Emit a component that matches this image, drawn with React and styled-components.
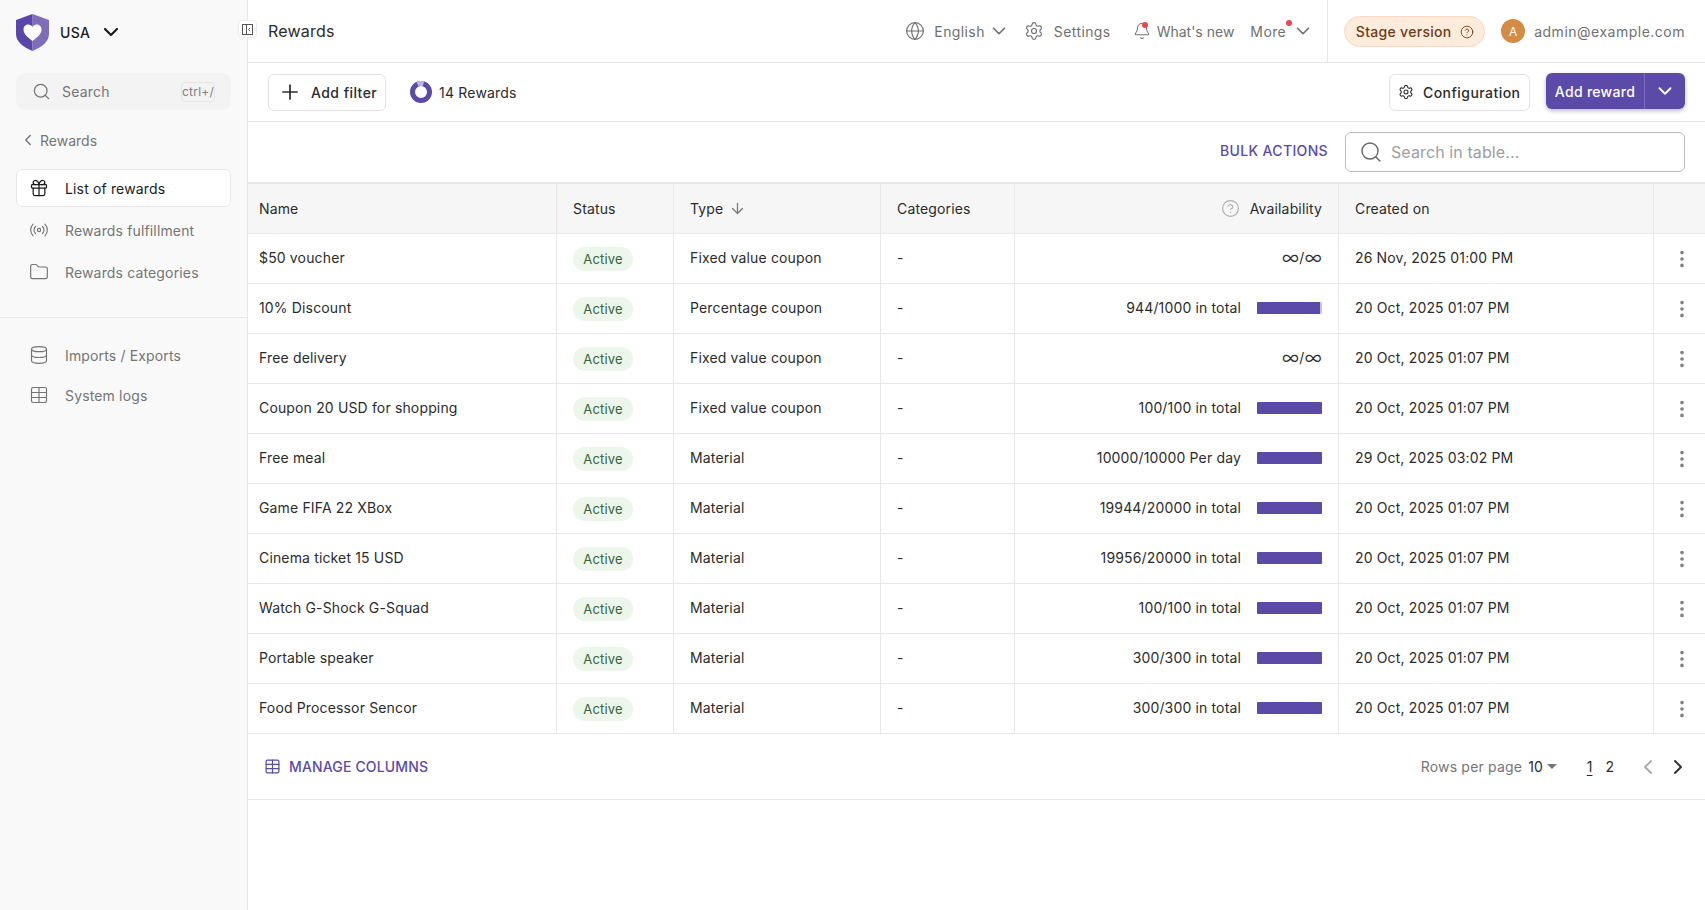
import React from "react";
import styled, { createGlobalStyle } from "styled-components";
import {
  ArrowDown,
  Bell,
  ChevronDown,
  ChevronLeft,
  ChevronRight,
  CircleHelp,
  Database,
  EllipsisVertical,
  Folder,
  Gift,
  Globe,
  Plus,
  Radio,
  Search,
  Settings,
  Table,
} from "lucide-react";

const PURPLE = "#5c4aa8";
const LINE = "#e8e8e8";

const GlobalStyle = createGlobalStyle`
  html, body { margin: 0; padding: 0; background: #fff; }
  body { font-family: Inter, "Liberation Sans", sans-serif; font-size: 14px; color: #2b2b2b; overflow: hidden; }
  * { box-sizing: border-box; }
`;

const Page = styled.div`
  display: flex;
  height: 910px;
  position: relative;
`;

const Sidebar = styled.aside`
  width: 248px;
  flex-shrink: 0;
  background: #f9f9f9;
  border-right: 1px solid ${LINE};
  display: flex;
  flex-direction: column;
`;

const Brand = styled.div`
  height: 63px;
  padding: 14px 16px 0;
  display: flex;
  align-items: flex-start;
  gap: 7px;
`;

const Country = styled.div`
  display: flex;
  align-items: center;
  gap: 9px;
  height: 36px;
  padding: 0 4px;
  font-weight: 500;
  color: #1c1c1c;
  letter-spacing: 0.3px;
`;

const SideSearch = styled.div`
  margin: 10px 16px 0;
  height: 37px;
  background: #f3f3f3;
  border-radius: 9px;
  display: flex;
  align-items: center;
  padding: 0 16px;
  gap: 11px;
  color: #757575;
  svg { flex-shrink: 0; }
`;

const SearchLabel = styled.span`
  flex: 1;
  letter-spacing: 0.2px;
`;

const Kbd = styled.span`
  font-size: 12px;
  color: #808080;
  border: 1px solid #e6e6e6;
  border-radius: 4px;
  height: 20px;
  width: 34px;
  display: flex;
  align-items: center;
  justify-content: center;
  white-space: nowrap;
  letter-spacing: 0.2px;
`;

const BackLink = styled.div`
  margin: 20px 0 0 19px;
  height: 20px;
  display: flex;
  align-items: center;
  gap: 3px;
  color: #757575;
`;

const NavList = styled.nav`
  display: flex;
  flex-direction: column;
  margin: ${({ $top }) => $top || 0}px 16px 0;
`;

const NavItem = styled.div`
  height: ${({ $height }) => $height}px;
  display: flex;
  align-items: center;
  gap: 16px;
  padding-left: 12px;
  border-radius: 6px;
  color: ${({ $active }) => ($active ? "#1c1c1c" : "#757575")};
  background: ${({ $active }) => ($active ? "#fff" : "transparent")};
  border: 1px solid ${({ $active }) => ($active ? LINE : "transparent")};
  letter-spacing: 0.15px;
`;

const SideDivider = styled.div`
  height: 1px;
  background: ${LINE};
  margin: 26px 0 17px;
`;

const CollapseButton = styled.button`
  position: absolute;
  left: 238px;
  top: 20px;
  width: 19px;
  height: 18px;
  padding: 0;
  background: #fff;
  border: 1px solid #ececec;
  border-radius: 4px;
  display: flex;
  align-items: center;
  justify-content: center;
`;

const Main = styled.main`
  flex: 1;
  min-width: 0;
  display: flex;
  flex-direction: column;
`;

const TopBar = styled.header`
  height: 63px;
  border-bottom: 1px solid ${LINE};
  display: flex;
  align-items: center;
  padding-left: 20px;
`;

const PageTitle = styled.div`
  flex: 1;
  font-size: 16px;
  color: #2b2b2b;
  margin-top: -1px;
  letter-spacing: 0.2px;
`;

const TopNav = styled.div`
  display: flex;
  align-items: center;
  height: 100%;
  color: #707070;
  padding-right: 13px;
  border-right: 1px solid ${LINE};
`;

const TopItem = styled.div`
  display: flex;
  align-items: center;
  gap: ${({ $gap }) => $gap}px;
  margin-left: ${({ $left }) => $left || 0}px;
  position: relative;
  white-space: nowrap;
  letter-spacing: ${({ $spacing }) => $spacing ?? 0.4}px;
`;

const RedDot = styled.span`
  position: absolute;
  width: 6px;
  height: 6px;
  border-radius: 50%;
  background: #ef4450;
  left: ${({ $left }) => $left}px;
  top: ${({ $top }) => $top}px;
`;

const TopRight = styled.div`
  display: flex;
  align-items: center;
  padding: 0 20px 0 16px;
`;

const StagePill = styled.div`
  width: 141px;
  height: 31px;
  margin-top: 1px;
  background: #fdebdc;
  border: 1px solid #fad9bf;
  border-radius: 16px;
  color: #6b3d17;
  font-weight: 500;
  letter-spacing: 0.3px;
  display: flex;
  align-items: center;
  justify-content: center;
  gap: 8px;
`;

const Avatar = styled.div`
  width: 24px;
  height: 24px;
  border-radius: 50%;
  background: #d38b45;
  color: #fff;
  font-size: 12px;
  display: flex;
  align-items: center;
  justify-content: center;
  margin: 0 9px 0 16px;
`;

const Email = styled.span`
  color: #707070;
  letter-spacing: 0.5px;
`;

const Toolbar = styled.div`
  height: 59px;
  border-bottom: 1px solid ${LINE};
  display: flex;
  align-items: center;
  padding: 0 20px;
`;

const OutlineButton = styled.button`
  height: 37px;
  background: #fff;
  border: 1px solid #e2e2e2;
  border-radius: 6px;
  display: flex;
  align-items: center;
  font: 450 14px Inter, sans-serif;
  color: #2b2b2b;
  gap: ${({ $gap }) => $gap}px;
  width: ${({ $width }) => $width}px;
  padding: 0 0 0 ${({ $pad }) => $pad}px;
  letter-spacing: 0.45px;
  white-space: nowrap;
`;

const RewardCount = styled.div`
  flex: 1;
  display: flex;
  align-items: center;
  gap: 7px;
  margin-left: 24px;
  letter-spacing: 0.2px;
`;

const SplitButton = styled.div`
  margin: -2px 0 0 16px;
  width: 139px;
  height: 36px;
  border-radius: 6px;
  background: ${PURPLE};
  color: #fff;
  font-weight: 500;
  letter-spacing: 0.3px;
  display: flex;
  box-shadow: 0 2px 4px rgba(0, 0, 0, 0.25);
`;

const SplitLabel = styled.div`
  width: 99px;
  display: flex;
  align-items: center;
  justify-content: center;
  border-right: 1px solid #7c6cbb;
  white-space: nowrap;
`;

const SplitArrow = styled.div`
  flex: 1;
  display: flex;
  align-items: center;
  justify-content: center;
`;

const ActionsRow = styled.div`
  height: 60px;
  display: flex;
  align-items: center;
  justify-content: flex-end;
  padding: 0 20px;
  gap: 17px;
`;

const BulkLink = styled.span`
  font-weight: 500;
  color: ${PURPLE};
  margin-top: -3px;
  letter-spacing: 0.35px;
`;

const TableSearch = styled.div`
  width: 340px;
  height: 40px;
  border: 1px solid #bdbdbd;
  border-radius: 6px;
  display: flex;
  align-items: center;
  gap: 8px;
  padding-left: 13px;
  color: #9e9e9e;
  font-size: 16px;
  letter-spacing: 0.1px;
`;

const Row = styled.div`
  display: grid;
  grid-template-columns: 309px 117px 207px 134px 324px 315px 1fr;
  height: ${({ $head }) => ($head ? 52 : 50)}px;
  background: ${({ $head }) => ($head ? "#f6f6f6" : "#fff")};
  border-bottom: 1px solid ${LINE};
  border-top: ${({ $head }) => ($head ? `2px solid ${LINE}` : "none")};
`;

const Cell = styled.div`
  display: flex;
  align-items: center;
  justify-content: ${({ $right }) => ($right ? "flex-end" : "flex-start")};
  gap: ${({ $gap }) => $gap || 0}px;
  padding: 0 16px 2px ${({ $pad }) => $pad ?? 11}px;
  border-right: ${({ $last }) => ($last ? "none" : `1px solid ${LINE}`)};
  white-space: nowrap;
  letter-spacing: 0.15px;
`;

const HeadCell = styled(Cell)`
  padding-bottom: 0;
`;

const MenuCell = styled(Cell)`
  padding: 0 0 0 17px;
  color: #808080;
`;

const Badge = styled.span`
  width: 60px;
  height: 24px;
  margin-top: 2px;
  border-radius: 12px;
  background: #edf6ea;
  color: #38643a;
  font-size: 13px;
  display: flex;
  align-items: center;
  justify-content: center;
`;

const Infinity = styled.span`
  font-size: 19px;
  font-weight: 300;
  line-height: 14px;
`;

const Track = styled.div`
  width: 65px;
  height: 12px;
  border-radius: 1px;
  background: #c9c1e4;
  overflow: hidden;
`;

const Fill = styled.div`
  height: 100%;
  background: ${PURPLE};
`;

const Footer = styled.div`
  height: 66px;
  border-bottom: 1px solid ${LINE};
  display: flex;
  align-items: center;
  padding: 0 15px 0 16px;
`;

const ManageColumns = styled.div`
  flex: 1;
  display: flex;
  align-items: center;
  gap: 8px;
  color: ${PURPLE};
  font-weight: 500;
  letter-spacing: 0.15px;
`;

const RowsLabel = styled.span`
  color: #757575;
  letter-spacing: 0.2px;
`;

const RowsValue = styled.span`
  margin-left: 6px;
`;

const Caret = styled.span`
  width: 0;
  height: 0;
  margin: 0 0 0 4px;
  border-left: 5px solid transparent;
  border-right: 5px solid transparent;
  border-top: 5px solid #757575;
`;

const PageNum = styled.span`
  margin-left: ${({ $left }) => $left}px;
  text-decoration: ${({ $current }) => ($current ? "underline" : "none")};
  text-underline-offset: 3px;
`;

const PagerArrow = styled.span`
  display: flex;
  margin-left: ${({ $left }) => $left}px;
  color: ${({ $disabled }) => ($disabled ? "#a8a8a8" : "#333")};
`;

const rewards = [
  { name: "$50 voucher", type: "Fixed value coupon", date: "26 Nov, 2025 01:00 PM" },
  { name: "10% Discount", type: "Percentage coupon", avail: "944/1000 in total", pct: 97, date: "20 Oct, 2025 01:07 PM" },
  { name: "Free delivery", type: "Fixed value coupon", date: "20 Oct, 2025 01:07 PM" },
  { name: "Coupon 20 USD for shopping", type: "Fixed value coupon", avail: "100/100 in total", pct: 100, date: "20 Oct, 2025 01:07 PM" },
  { name: "Free meal", type: "Material", avail: "10000/10000 Per day", pct: 100, date: "29 Oct, 2025 03:02 PM" },
  { name: "Game FIFA 22 XBox", type: "Material", avail: "19944/20000 in total", pct: 100, date: "20 Oct, 2025 01:07 PM" },
  { name: "Cinema ticket 15 USD", type: "Material", avail: "19956/20000 in total", pct: 100, date: "20 Oct, 2025 01:07 PM" },
  { name: "Watch G-Shock G-Squad", type: "Material", avail: "100/100 in total", pct: 100, date: "20 Oct, 2025 01:07 PM" },
  { name: "Portable speaker", type: "Material", avail: "300/300 in total", pct: 100, date: "20 Oct, 2025 01:07 PM" },
  { name: "Food Processor Sencor", type: "Material", avail: "300/300 in total", pct: 100, date: "20 Oct, 2025 01:07 PM" },
];

const Logo = () => (
  <svg width="33" height="37" viewBox="0 0 33 37">
    <path d="M16.5 0 L33 6 V20 C33 28 25 33.5 16.5 37 Z" fill="#7f6dbb" />
    <path d="M16.5 0 L0 6 V20 C0 28 8 33.5 16.5 37 Z" fill="#5c45a8" />
    <path
      d="M16.5 27 C12 23.5 7.5 20 7.5 15.5 C7.5 12.5 9.7 10.5 12.2 10.5 C14 10.5 15.6 11.4 16.5 13 C17.4 11.4 19 10.5 20.8 10.5 C23.3 10.5 25.5 12.5 25.5 15.5 C25.5 20 21 23.5 16.5 27 Z"
      fill="#fff"
    />
  </svg>
);

const CollapseIcon = () => (
  <svg width="11" height="11" viewBox="0 0 11 11" fill="none" stroke="#555" strokeWidth="1">
    <rect x="0.5" y="0.5" width="10" height="10" />
    <path d="M4.5 0.5 V10.5 M8 4 L6.5 5.5 L8 7" />
  </svg>
);

const CountRing = () => (
  <svg width="22" height="22" viewBox="0 0 22 22" fill="none" strokeWidth="5">
    <circle cx="11" cy="11" r="8.5" stroke={PURPLE} />
    <path d="M7.5 3.25 A8.5 8.5 0 0 1 13.5 2.9" stroke="#bdb4dc" />
  </svg>
);

const App = () => {
  return (
    <Page>
      <GlobalStyle />
      <Sidebar>
        <Brand>
          <Logo />
          <Country>
            USA
            <ChevronDown size={24} color="#1c1c1c" strokeWidth={2.2} />
          </Country>
        </Brand>
        <SideSearch>
          <Search size={19} strokeWidth={1.6} />
          <SearchLabel>Search</SearchLabel>
          <Kbd>ctrl+/</Kbd>
        </SideSearch>
        <BackLink>
          <ChevronLeft size={18} strokeWidth={1.8} />
          Rewards
        </BackLink>
        <NavList $top={19}>
          <NavItem $active $height={38}>
            <Gift size={20} color="#1c1c1c" strokeWidth={1.5} />
            List of rewards
          </NavItem>
          <NavItem $height={46}>
            <Radio size={20} strokeWidth={1.4} />
            Rewards fulfillment
          </NavItem>
          <NavItem $height={38}>
            <Folder size={20} strokeWidth={1.4} />
            Rewards categories
          </NavItem>
        </NavList>
        <SideDivider />
        <NavList>
          <NavItem $height={40}>
            <Database size={20} strokeWidth={1.4} />
            Imports / Exports
          </NavItem>
          <NavItem $height={40}>
            <Table size={20} strokeWidth={1.4} />
            System logs
          </NavItem>
        </NavList>
      </Sidebar>
      <CollapseButton aria-label="Collapse sidebar">
        <CollapseIcon />
      </CollapseButton>

      <Main>
        <TopBar>
          <PageTitle>Rewards</PageTitle>
          <TopNav>
            <TopItem $gap={9}>
              <Globe size={20} strokeWidth={1.4} />
              <span>English</span>
            </TopItem>
            <TopItem $left={3}>
              <ChevronDown size={22} strokeWidth={1.9} />
            </TopItem>
            <TopItem $gap={10} $left={14}>
              <Settings size={20} strokeWidth={1.4} />
              Settings
            </TopItem>
            <TopItem $gap={6} $left={22} $spacing={0}>
              <Bell size={18} strokeWidth={1.4} />
              <RedDot $left={9} $top={0} />
              What's new
            </TopItem>
            <TopItem $gap={6} $left={16}>
              More
              <RedDot $left={36} $top={0} />
              <ChevronDown size={22} strokeWidth={1.9} />
            </TopItem>
          </TopNav>
          <TopRight>
            <StagePill>
              Stage version
              <CircleHelp size={14} strokeWidth={1.5} />
            </StagePill>
            <Avatar>A</Avatar>
            <Email>admin@example.com</Email>
          </TopRight>
        </TopBar>

        <Toolbar>
          <OutlineButton $width={118} $pad={9} $gap={9}>
            <Plus size={24} strokeWidth={1.7} />
            Add filter
          </OutlineButton>
          <RewardCount>
            <CountRing />
            14 Rewards
          </RewardCount>
          <OutlineButton $width={141} $pad={8} $gap={9}>
            <Settings size={16} strokeWidth={1.6} />
            Configuration
          </OutlineButton>
          <SplitButton>
            <SplitLabel>Add reward</SplitLabel>
            <SplitArrow>
              <ChevronDown size={22} strokeWidth={2} />
            </SplitArrow>
          </SplitButton>
        </Toolbar>

        <ActionsRow>
          <BulkLink>BULK ACTIONS</BulkLink>
          <TableSearch>
            <Search size={24} strokeWidth={1.4} color="#666" />
            Search in table...
          </TableSearch>
        </ActionsRow>

        <Row $head>
          <HeadCell>Name</HeadCell>
          <HeadCell $pad={16}>Status</HeadCell>
          <HeadCell $pad={16} $gap={6}>
            Type
            <ArrowDown size={17} color="#777" strokeWidth={1.8} />
          </HeadCell>
          <HeadCell $pad={16}>Categories</HeadCell>
          <HeadCell $right $gap={10}>
            <CircleHelp size={19} color="#b0b0b0" strokeWidth={1.5} />
            Availability
          </HeadCell>
          <HeadCell $pad={16}>Created on</HeadCell>
          <HeadCell $last />
        </Row>
        {rewards.map((reward) => (
          <Row key={reward.name}>
            <Cell>{reward.name}</Cell>
            <Cell $pad={16}>
              <Badge>Active</Badge>
            </Cell>
            <Cell $pad={16}>{reward.type}</Cell>
            <Cell $pad={16}>-</Cell>
            {reward.pct ? (
              <Cell $right $gap={16}>
                {reward.avail}
                <Track>
                  <Fill style={{ width: `${reward.pct}%` }} />
                </Track>
              </Cell>
            ) : (
              <Cell $right>
                <Infinity>∞</Infinity>/<Infinity>∞</Infinity>
              </Cell>
            )}
            <Cell $pad={16}>{reward.date}</Cell>
            <MenuCell $last>
              <EllipsisVertical size={22} strokeWidth={2} />
            </MenuCell>
          </Row>
        ))}

        <Footer>
          <ManageColumns>
            <Table size={17} strokeWidth={1.7} />
            MANAGE COLUMNS
          </ManageColumns>
          <RowsLabel>Rows per page</RowsLabel>
          <RowsValue>10</RowsValue>
          <Caret />
          <PageNum $current $left={30}>1</PageNum>
          <PageNum $left={13}>2</PageNum>
          <PagerArrow $disabled $left={22}>
            <ChevronLeft size={24} strokeWidth={1.8} />
          </PagerArrow>
          <PagerArrow $left={6}>
            <ChevronRight size={24} strokeWidth={2} />
          </PagerArrow>
        </Footer>
      </Main>
    </Page>
  );
};

export default App;
